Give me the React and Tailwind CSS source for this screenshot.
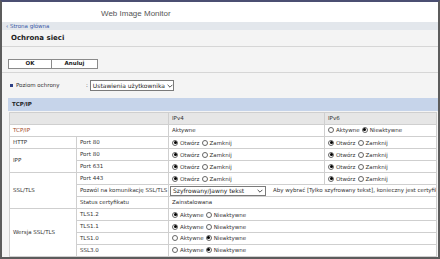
import React from "react";

const Radio = ({ on }) => (
  <span className="inline-flex items-center justify-center w-[6px] h-[6px] rounded-full border border-[#666] bg-white mr-[2px] align-[-1px]">
    {on && <span className="w-[3px] h-[3px] rounded-full bg-black" />}
  </span>
);

const Pair = ({ a, b, first }) => (
  <span className="inline-flex items-center gap-[2px]">
    <span className="inline-flex items-center">
      <Radio on={first} />
      {a}
    </span>
    <span className="inline-flex items-center">
      <Radio on={!first} />
      {b}
    </span>
  </span>
);

const Chevron = () => (
  <svg viewBox="0 0 10 6" className="w-[6px] h-[4px] shrink-0" fill="none" stroke="#333" strokeWidth="1.4">
    <path d="M1 1l4 4 4-4" />
  </svg>
);

const td = "border border-[#cfcfcf] px-[3px] h-[12px] whitespace-nowrap";

export default function App() {
  return (
    <div className="w-[440px] h-[259px] overflow-hidden bg-[#f4f4f4] border-x-2 border-b-2 border-[#5c5c5c] border-t-2 border-t-[#4b4f72] flex flex-col font-['DejaVu_Sans',sans-serif] text-[5.5px] text-[#333]">
      {/* header */}
      <div className="h-[20px] shrink-0 bg-white flex items-center pt-[3px] pl-[99px] text-[#555] text-[8px] font-['Liberation_Sans',sans-serif]">
        Web Image Monitor
      </div>
      <div className="h-[8px] shrink-0 bg-[#e3e7ec] flex items-center pl-[4px] text-[#3a5aa8] text-[5.5px]">
        ‹ Strona główna
      </div>

      {/* title */}
      <div className="h-[17px] shrink-0 flex items-center pl-[9px] border-b border-[#d6d6d6] text-[#222] text-[7px] font-bold">
        Ochrona sieci
      </div>

      {/* buttons */}
      <div className="h-[26px] shrink-0 flex items-end pb-[3px] pl-[6px] border-b border-[#d6d6d6]">
        <div className="flex">
          <button className="w-[44px] h-[10px] bg-white border border-[#8a8a8a] text-[5.5px] font-bold text-[#222] leading-none">
            OK
          </button>
          <button className="w-[46px] h-[10px] bg-white border border-l-0 border-[#8a8a8a] text-[5.5px] font-bold text-[#222] leading-none">
            Anuluj
          </button>
        </div>
      </div>

      {/* level */}
      <div className="h-[25px] shrink-0 flex items-center pl-[8px]">
        <span className="w-[3px] h-[3px] bg-[#2d3f86] mr-[3px]" />
        <span className="w-[70px]">Poziom ochrony</span>
        <span className="mr-[2px]">:</span>
        <span className="h-[11px] w-[84px] bg-white border border-[#7a7a7a] flex items-center justify-between gap-[2px] px-[2px] text-[6px] text-[#222] whitespace-nowrap">
          Ustawienia użytkownika
          <Chevron />
        </span>
      </div>

      {/* section */}
      <div className="ml-[6px] h-[13px] shrink-0 bg-[#c6d4ea] flex items-center pl-[4px] font-bold text-[#222] text-[5.5px]">
        TCP/IP
      </div>

      <div className="pl-[7px] pr-[1px] pt-[1px]">
        <table className="w-full border-collapse bg-white table-fixed">
          <colgroup>
            <col className="w-[67px]" />
            <col className="w-[92px]" />
            <col className="w-[156px]" />
            <col />
          </colgroup>
          <tbody>
            <tr className="bg-[#e6e6e6]">
              <td className={td + " h-[10px]"} colSpan={2}></td>
              <td className={td + " h-[10px]"}>IPv4</td>
              <td className={td + " h-[10px]"}>IPv6</td>
            </tr>
            <tr>
              <td className={td + " text-[#a0481f]"} colSpan={2}>TCP/IP</td>
              <td className={td}>Aktywne</td>
              <td className={td}>
                <Pair a="Aktywne" b="Nieaktywne" first={false} />
              </td>
            </tr>
            <tr>
              <td className={td}>HTTP</td>
              <td className={td}>Port 80</td>
              <td className={td}>
                <Pair a="Otwórz" b="Zamknij" first />
              </td>
              <td className={td}>
                <Pair a="Otwórz" b="Zamknij" first />
              </td>
            </tr>
            <tr>
              <td className={td} rowSpan={2}>IPP</td>
              <td className={td}>Port 80</td>
              <td className={td}>
                <Pair a="Otwórz" b="Zamknij" first />
              </td>
              <td className={td}>
                <Pair a="Otwórz" b="Zamknij" first />
              </td>
            </tr>
            <tr>
              <td className={td}>Port 631</td>
              <td className={td}>
                <Pair a="Otwórz" b="Zamknij" first />
              </td>
              <td className={td}>
                <Pair a="Otwórz" b="Zamknij" first />
              </td>
            </tr>
            <tr>
              <td className={td} rowSpan={3}>SSL/TLS</td>
              <td className={td}>Port 443</td>
              <td className={td}>
                <Pair a="Otwórz" b="Zamknij" first />
              </td>
              <td className={td}>
                <Pair a="Otwórz" b="Zamknij" first />
              </td>
            </tr>
            <tr>
              <td className={td}>Pozwól na komunikację SSL/TLS</td>
              <td className={td + " pl-[1px] overflow-hidden"} colSpan={2}>
                <div className="flex items-center">
                  <span className="h-[10px] w-[96px] shrink-0 bg-white border border-[#7a7a7a] flex items-center justify-between px-[2px] text-[6px] text-[#222]">
                    Szyfrowany/Jawny tekst
                    <Chevron />
                  </span>
                  <span className="ml-[7px]">
                    Aby wybrać [Tylko szyfrowany tekst], konieczny jest certyfikat.
                  </span>
                </div>
              </td>
            </tr>
            <tr>
              <td className={td}>Status certyfikatu</td>
              <td className={td} colSpan={2}>Zainstalowana</td>
            </tr>
            <tr>
              <td className={td} rowSpan={4}>Wersja SSL/TLS</td>
              <td className={td}>TLS1.2</td>
              <td className={td} colSpan={2}>
                <Pair a="Aktywne" b="Nieaktywne" first />
              </td>
            </tr>
            <tr>
              <td className={td}>TLS1.1</td>
              <td className={td} colSpan={2}>
                <Pair a="Aktywne" b="Nieaktywne" first />
              </td>
            </tr>
            <tr>
              <td className={td}>TLS1.0</td>
              <td className={td} colSpan={2}>
                <Pair a="Aktywne" b="Nieaktywne" first={false} />
              </td>
            </tr>
            <tr>
              <td className={td}>SSL3.0</td>
              <td className={td} colSpan={2}>
                <Pair a="Aktywne" b="Nieaktywne" first={false} />
              </td>
            </tr>
          </tbody>
        </table>
      </div>
    </div>
  );
}
